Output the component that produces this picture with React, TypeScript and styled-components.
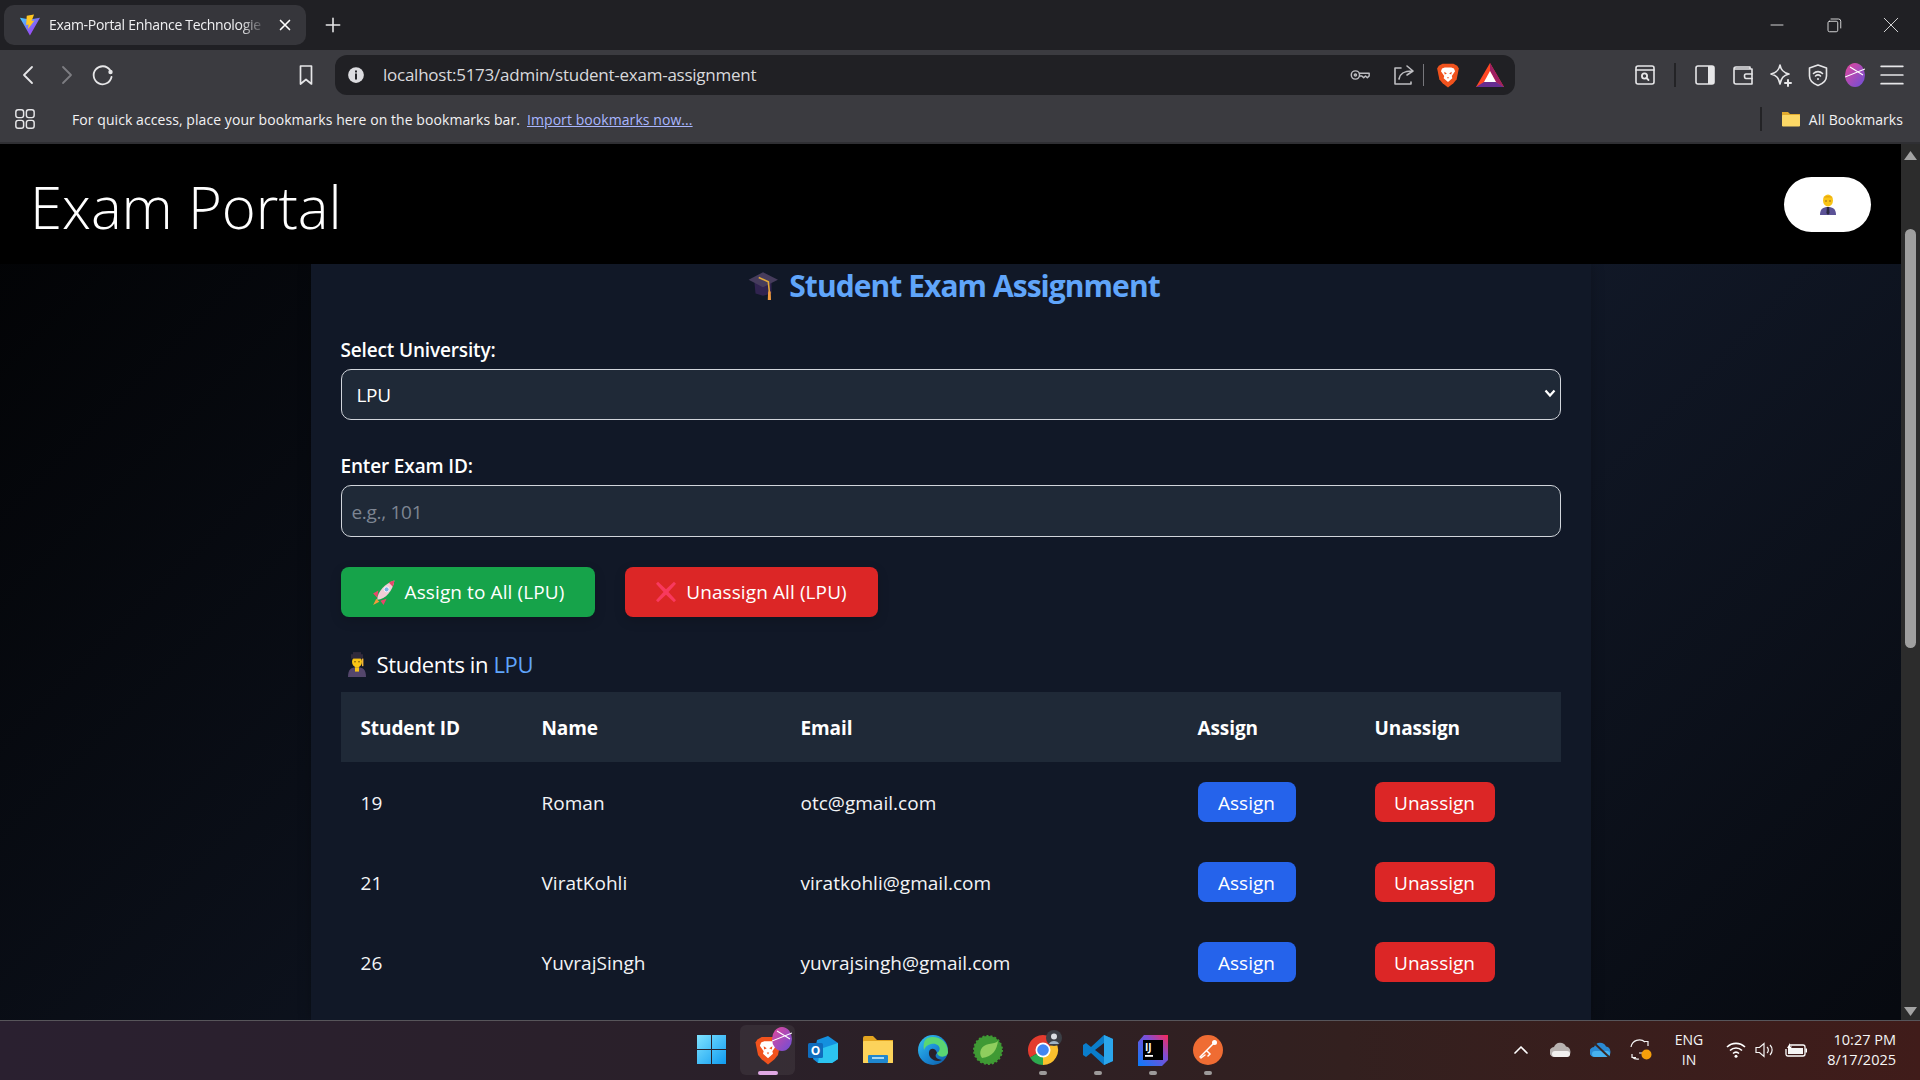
import React from "react";
import styled, { createGlobalStyle } from "styled-components";

const UI = `"Open Sans", "Noto Sans", "Liberation Sans", sans-serif`;

const Global = createGlobalStyle`
  html, body { margin: 0; padding: 0; height: 100%; overflow: hidden; background: #000; }
  #root { height: 100%; }
  * { box-sizing: border-box; }
`;

const Screen = styled.div`
  width: 1920px; height: 1080px; display: flex; flex-direction: column; overflow: hidden;
  font-family: ${UI}; color: #fff;
`;

/* ---------- browser chrome ---------- */
const TabStrip = styled.div`
  height: 50px; flex: none; background: #202024; display: flex; align-items: flex-start; padding: 5px 0 0 4px;
`;
const Tab = styled.div`
  width: 302px; height: 40px; border-radius: 10px; background: #36363b; display: flex; align-items: center; padding: 0 12px 0 15px;
`;
const TabTitle = styled.span`
  margin-left: 8px; width: 218px; font-size: 14px; line-height: 18px; padding-bottom: 1px; letter-spacing: -0.3px; white-space: nowrap; overflow: hidden; color: #f0f0f2;
  -webkit-mask-image: linear-gradient(90deg, #000 88%, transparent 100%);
  mask-image: linear-gradient(90deg, #000 88%, transparent 100%);
`;
const TabClose = styled.span`
  margin-left: 10px; display: flex;
`;
const NewTab = styled.span`
  margin-left: 17px; margin-top: 10px; display: flex;
`;
const WindowControls = styled.div`
  margin-left: auto; display: flex; height: 40px; align-items: center; padding-right: 1px;
`;
const WindowButton = styled.span`
  width: 57px; display: flex; justify-content: center;
`;
const Toolbar = styled.div`
  height: 50px; flex: none; background: #3b3b40; display: flex; align-items: center; padding: 0 0 0 10px;
`;
const Slot = styled.span<{ $w: number; $ml?: number }>`
  width: ${(p) => p.$w}px; margin-left: ${(p) => p.$ml ?? 0}px; flex: none; display: flex; align-items: center; justify-content: center;
`;
const UrlBar = styled.div`
  width: 1180px; height: 40px; margin-left: 11px; flex: none; background: #202024; border-radius: 12px; display: flex; align-items: center; padding: 0 7px 0 12px;
`;
const UrlText = styled.span`
  margin-left: 18px; font-size: 17px; line-height: 22px; padding-bottom: 1px; letter-spacing: -0.25px; color: #d9d9dc; flex: 1;
`;
const Sep = styled.span<{ $h: number; $c: string; $w?: number; $ml?: number }>`
  width: ${(p) => p.$w ?? 1}px; height: ${(p) => p.$h}px; background: ${(p) => p.$c}; flex: none; margin-left: ${(p) => p.$ml ?? 0}px;
`;
const BookmarksBar = styled.div`
  height: 44px; flex: none; background: #3b3b40; border-bottom: 2px solid #2f2f33; display: flex; align-items: center; padding: 0 0 4px 14px; font-size: 14px; letter-spacing: 0.07px;
`;
const BookmarkHint = styled.span`
  margin-left: 36px; color: #f2f2f4;
`;
const ImportLink = styled.a`
  margin-left: 7px; color: #a9b6ff; text-decoration: underline;
`;
const AllBookmarks = styled.div`
  margin-left: auto; display: flex; align-items: center; padding-right: 17px; color: #f2f2f4;
`;
const FolderBox = styled.span`
  margin: 0 8px 0 19px; display: flex;
`;

/* ---------- page ---------- */
const Viewport = styled.div`
  height: 876px; flex: none; display: flex;
`;
const PageColumn = styled.div`
  flex: 1; min-width: 0; display: flex; flex-direction: column;
  background-color: #000;
  background-image: linear-gradient(135deg, #000 0%, #111827 50%, #000 100%);
  background-size: 1901px 1750px;
  background-position: 0 -134px;
  overflow: hidden;
`;
const SiteHeader = styled.header`
  height: 120px; flex: none; background: #000; display: flex; align-items: center; justify-content: space-between; padding: 0 30px;
`;
const Brand = styled.div`
  font-size: 58px; font-weight: 300; letter-spacing: 0; color: #fff; margin-top: 5px;
`;
const AvatarButton = styled.button`
  width: 87px; height: 55px; border-radius: 28px; background: #fff; border: 0; display: flex; align-items: center; justify-content: center; padding: 0; margin-top: 1px;
`;
const Panel = styled.main`
  width: 1280px; margin: 0 auto; flex: 1; background: #111827; padding: 0 30px; box-shadow: 0 0 12px rgba(0,0,0,.25);
`;
const PageTitle = styled.h2`
  margin: 0; height: 42px; display: flex; align-items: center; justify-content: center; gap: 10px; font-size: 30px; font-weight: 700; letter-spacing: -0.95px; color: #60a5fa; padding-left: 6px;
`;
const Field = styled.div<{ $mt: number }>`
  margin-top: ${(p) => p.$mt}px;
`;
const FieldLabel = styled.label`
  display: block; height: 26px; line-height: 26px; font-size: 19px; font-weight: 600; letter-spacing: -0.15px; color: #fff; margin-bottom: 6px;
`;
const SelectWrap = styled.div`
  position: relative;
`;
const Select = styled.select`
  display: block; width: 100%; height: 51px; padding: 1px 30px 0 15px; appearance: none; -webkit-appearance: none; background: #1f2937; color: #fff; border: 1px solid #d1d5db; border-radius: 10px; font-family: ${UI}; font-size: 19px; letter-spacing: -0.3px; outline: 0;
`;
const SelectChevron = styled.span`
  position: absolute; right: 5px; top: 20px; display: flex; pointer-events: none;
`;
const Input = styled.input`
  display: block; width: 100%; height: 52px; padding: 1px 10px 0; background: #1f2937; color: #fff; border: 1px solid #d1d5db; border-radius: 10px; font-family: ${UI}; font-size: 19px; letter-spacing: -0.3px; outline: 0;
  &::placeholder { color: #7d8592; opacity: 1; }
`;
const Actions = styled.div`
  display: flex; gap: 30px; margin-top: 30px;
`;
const BulkButton = styled.button<{ $bg: string; $w: number }>`
  width: ${(p) => p.$w}px; height: 50px; border: 0; border-radius: 8px; background: ${(p) => p.$bg}; color: #fff; display: flex; align-items: center; justify-content: center; gap: 9px; font-family: ${UI}; font-size: 19px; letter-spacing: 0.1px; box-shadow: 0 4px 12px rgba(0,0,0,.15);
`;
const SectionTitle = styled.h3`
  margin: 29px 0 0; height: 36px; display: flex; align-items: center; gap: 9px; padding-left: 5px; font-size: 22px; font-weight: 400; letter-spacing: -0.38px; color: #fff;
`;
const Accent = styled.span`
  color: #60a5fa;
`;
const SectionText = styled.span``;
const Table = styled.table`
  width: 100%; margin-top: 10px; border-collapse: collapse; table-layout: fixed;
`;
const Th = styled.th<{ $w: number }>`
  width: ${(p) => p.$w}px; height: 70px; padding: 2px 20px 0; background: #1f2937; text-align: left; font-size: 19px; font-weight: 700; letter-spacing: -0.1px; color: #fff;
`;
const Td = styled.td`
  height: 80px; padding: 1px 20px 0; font-size: 19px; letter-spacing: 0.02px; color: #f3f4f6;
`;
const ButtonCell = styled.td`
  height: 80px; padding: 0 20px; vertical-align: middle;
`;
const RowButton = styled.button<{ $bg: string; $w: number }>`
  width: ${(p) => p.$w}px; height: 40px; border: 0; border-radius: 8px; background: ${(p) => p.$bg}; color: #fff; font-family: ${UI}; font-size: 19px; letter-spacing: 0; padding: 1px 0 0; display: block;
`;
const Scrollbar = styled.div`
  width: 19px; flex: none; background: #2c2c2c; display: flex; flex-direction: column; align-items: center; padding: 7px 0 4px;
`;
const ScrollThumb = styled.div`
  width: 11px; height: 419px; margin-top: 69px; background: #9f9f9f; border-radius: 6px;
`;
const ScrollArrowDown = styled.span`
  margin-top: auto; display: flex;
`;

/* ---------- taskbar ---------- */
const Taskbar = styled.div`
  height: 60px; flex: none; border-top: 1px solid #57555a; background: linear-gradient(90deg, #2a2030 0%, #2a2029 40%, #33201f 70%, #401c1a 100%); display: flex; align-items: center; padding: 0 24px 2px 683px;
`;
const AppSlot = styled.span<{ $w?: number; $active?: boolean; $dot?: boolean }>`
  position: relative; width: ${(p) => p.$w ?? 55}px; height: 50px; display: flex; align-items: center; justify-content: center;
  border-radius: 6px;
  background: ${(p) => (p.$active ? "rgba(255,255,255,.06)" : "transparent")};
  &::after {
    content: ""; display: ${(p) => (p.$dot || p.$active ? "block" : "none")}; position: absolute; bottom: 0; left: 50%;
    width: ${(p) => (p.$active ? 20 : 8)}px; height: 4px; margin-left: ${(p) => (p.$active ? -10 : -4)}px; border-radius: 2px; background: ${(p) => (p.$active ? "#e0a8e4" : "#9d9a9a")};
  }
`;
const BrandBadge = styled.span`
  position: absolute; top: 2px; right: 3px; display: flex;
`;
const Tray = styled.div`
  margin-left: auto; display: flex; align-items: center; height: 100%;
`;
const LangBox = styled.div`
  width: 56px; text-align: center; font-size: 14px; line-height: 20px; color: #f5f5f5;
`;
const Clock = styled.div`
  width: 79px; text-align: right; font-size: 14.5px; line-height: 20px; color: #f5f5f5; white-space: nowrap;
`;

/* ---------- drawings ---------- */
const S = { fill: "none", stroke: "#e6e6e8", strokeWidth: 1.6, strokeLinecap: "round", strokeLinejoin: "round" } as const;

const Ico = ({ s = 22, children }: { s?: number; children: React.ReactNode }) => (
  <svg width={s} height={s} viewBox="0 0 24 24">{children}</svg>
);

const ViteIcon = () => (
  <svg width="22" height="22" viewBox="0 0 24 24">
    <defs>
      <linearGradient id="vt" x1="0" y1="0" x2="1" y2="1"><stop offset="0" stopColor="#41d1ff" /><stop offset=".6" stopColor="#8b5cf6" /><stop offset="1" stopColor="#bd34fe" /></linearGradient>
    </defs>
    <path d="M1 4 L12 23.5 L23 4 L12 6 Z" fill="url(#vt)" />
    <path d="M16.5 .5 L8.5 2 L7.8 12 L10.5 11.4 L9.8 16.5 L17 7 L13.8 7.6 Z" fill="#ffc61f" />
  </svg>
);
const BraveIcon = ({ s = 24 }: { s?: number }) => (
  <svg width={s} height={s} viewBox="0 0 24 24">
    <path d="M7 1.5 H17 L20.5 3.5 L22 6 L20 16 L17 19.5 L12 23.5 L7 19.5 L4 16 L2 6 L3.5 3.5 Z" fill="#f0521d" />
    <path d="M6.5 6 L9 5 H15 L17.5 6 L18.5 8.5 L15.5 13 L16 15 L12 18.5 L8 15 L8.5 13 L5.5 8.5 Z" fill="#fff" />
    <path d="M8.5 9 L11 10.5 L9 11.5 Z M15.5 9 L13 10.5 L15 11.5 Z M11 14 H13 L12 15.5 Z" fill="#f0521d" />
  </svg>
);
const BatIcon = () => (
  <svg width="30" height="26" viewBox="0 0 30 26">
    <path d="M15 1 L29 25 H1 Z" fill="#ff4724" />
    <path d="M15 1 L29 25 L21 20 L15 9 Z" fill="#9e1f63" />
    <path d="M1 25 H29 L21 20 H9 Z" fill="#662d91" />
    <path d="M15 9 L21 20 H9 Z" fill="#fff" />
  </svg>
);
const ProfileOrb = ({ s = 20 }: { s?: number }) => (
  <svg width={s} height={s * 1.2} viewBox="0 0 20 24">
    <defs>
      <linearGradient id={`orb${s}`} x1="0" y1="0" x2="1" y2="1"><stop offset="0" stopColor="#e5479b" /><stop offset="1" stopColor="#6a4fd8" /></linearGradient>
    </defs>
    <ellipse cx="10" cy="12" rx="10" ry="12" fill={`url(#orb${s})`} />
    <path d="M0 14 L20 6 M5 4 L18 12" stroke="#fff" strokeWidth="1.1" fill="none" />
  </svg>
);
const CapEmoji = () => (
  <svg width="32" height="32" viewBox="0 0 30 30">
    <path d="M7 13 H23 V23 L15 25 L8 23 Z" fill="#30234f" />
    <path d="M15 3 L29 10 L15 17 L1.5 10 Z" fill="#463c5c" />
    <path d="M11 8 L20 12 L21 22" stroke="#e3a93a" strokeWidth="1.5" fill="none" />
    <path d="M19.8 21 h2.4 l.3 8 h-3 Z" fill="#f09a3e" />
  </svg>
);
const RocketEmoji = () => (
  <svg width="25" height="27" viewBox="0 0 24 26">
    <path d="M5 19 L2 25 L8 22 Z" fill="#f59a3b" />
    <path d="M7 11 L2 14 L6 18 Z M15 19 L12 25 L9 21 Z" fill="#e8476a" />
    <path d="M6 20 C6 12 14 4 22.5 1.5 C21 11 14 20 6 20 Z" fill="#f3cdd6" />
    <path d="M17 3.3 C19 2.4 21 1.8 22.5 1.5 C22.2 3.4 21.7 5.5 21 7.5 Z" fill="#e8476a" />
    <circle cx="15" cy="10" r="2.4" fill="#7fb3e6" stroke="#fff" strokeWidth=".8" />
  </svg>
);
const CrossEmoji = () => (
  <svg width="22" height="24" viewBox="0 0 22 22" preserveAspectRatio="none">
    <path d="M3 1.5 L11 8.5 L19 1.5 L21 3.5 L13.5 11 L21 18.5 L19 20.5 L11 13.5 L3 20.5 L1 18.5 L8.5 11 L1 3.5 Z" fill="#f8395e" />
  </svg>
);
const StudentEmoji = () => (
  <svg width="22" height="26" viewBox="0 0 22 24" preserveAspectRatio="none">
    <path d="M2 24 C2 17 5 15 11 15 C17 15 20 17 20 24 Z" fill="#54466c" />
    <circle cx="11" cy="10" r="5" fill="#f9c416" />
    <rect x="5" y="3" width="12" height="4" fill="#302a3b" />
    <rect x="7" y="1" width="8" height="3" fill="#302a3b" />
    <rect x="9" y="15" width="4" height="4" fill="#f9c416" />
    <circle cx="9" cy="10" r=".7" fill="#55380f" /><circle cx="13" cy="10" r=".7" fill="#55380f" />
    <rect x="16" y="7" width="1.4" height="7" fill="#f0b43c" />
  </svg>
);
const WorkerEmoji = () => (
  <svg width="18" height="22" viewBox="0 0 18 22">
    <path d="M1 21 C1 15 4 13 9 13 C14 13 17 15 17 21 Z" fill="#5b5296" />
    <path d="M8 13 H10 L10.6 19 L9 21 L7.4 19 Z" fill="#2a2840" />
    <ellipse cx="9" cy="6.5" rx="5" ry="6" fill="#f9c416" />
    <path d="M4 5 C4 1 14 1 14 5 L13 3.6 H5 Z" fill="#e7a50f" />
    <circle cx="7" cy="7" r=".7" fill="#7a4b10" /><circle cx="11" cy="7" r=".7" fill="#7a4b10" />
  </svg>
);

const students = [
  { id: 19, name: "Roman", email: "otc@gmail.com" },
  { id: 21, name: "ViratKohli", email: "viratkohli@gmail.com" },
  { id: 26, name: "YuvrajSingh", email: "yuvrajsingh@gmail.com" },
];

export default function App() {
  return (
    <Screen>
      <Global />
      <TabStrip>
        <Tab>
          <ViteIcon />
          <TabTitle>Exam-Portal Enhance Technologie</TabTitle>
          <TabClose><Ico s={18}><path d="M6 6 L18 18 M18 6 L6 18" {...S} strokeWidth={2.2} stroke="#fff" /></Ico></TabClose>
        </Tab>
        <NewTab><Ico s={20}><path d="M12 4 V20 M4 12 H20" {...S} strokeWidth={1.9} /></Ico></NewTab>
        <WindowControls>
          <WindowButton><Ico s={18}><path d="M4 12 H20" {...S} strokeWidth={1.2} /></Ico></WindowButton>
          <WindowButton><Ico s={18}><rect x="4" y="7" width="13" height="14" rx="2" {...S} strokeWidth={1.2} /><path d="M8 4 H18 Q21 4 21 7 V16" {...S} strokeWidth={1.2} /></Ico></WindowButton>
          <WindowButton><Ico s={18}><path d="M3 3 L21 21 M21 3 L3 21" {...S} strokeWidth={1.2} /></Ico></WindowButton>
        </WindowControls>
      </TabStrip>

      <Toolbar>
        <Slot $w={37}><Ico s={24}><path d="M15 4 L7 12 L15 20" {...S} strokeWidth={1.8} /></Ico></Slot>
        <Slot $w={37}><Ico s={24}><path d="M9 4 L17 12 L9 20" {...S} strokeWidth={1.8} stroke="#7d7d82" /></Ico></Slot>
        <Slot $w={37}><Ico s={24}><path d="M19 7 A9 9 0 1 0 20.5 14" {...S} strokeWidth={1.8} /><circle cx="19.5" cy="9" r="2.2" fill="#e6e6e8" /></Ico></Slot>
        <Slot $w={37} $ml={166}><Ico s={24}><path d="M6.5 3 H17.5 V21 L12 16.5 L6.5 21 Z" {...S} strokeWidth={1.7} /></Ico></Slot>
        <UrlBar>
          <Ico s={18}>
            <circle cx="12" cy="12" r="10.5" fill="#dcdce0" />
            <rect x="10.7" y="10" width="2.6" height="8" fill="#202024" />
            <rect x="10.7" y="6" width="2.6" height="2.6" fill="#202024" />
          </Ico>
          <UrlText>localhost:5173/admin/student-exam-assignment</UrlText>
          <Slot $w={44}><Ico s={22}><circle cx="7" cy="12" r="4.5" {...S} stroke="#bdbdc1" /><circle cx="7" cy="12" r="1.2" {...S} stroke="#bdbdc1" /><path d="M11.5 10 H22 V13 L20 15 L18 13 L16 15 L14 13 H11.5" {...S} stroke="#bdbdc1" /></Ico></Slot>
          <Slot $w={41}><Ico s={24}><path d="M10 5 H4 V21 H20 V19" {...S} stroke="#bdbdc1" /><path d="M8 16 C9 10 13 8 21 8 M16 3 L22 8 L16 12" {...S} stroke="#bdbdc1" /></Ico></Slot>
          <Sep $h={22} $c="#77777c" />
          <Slot $w={48}><BraveIcon s={26} /></Slot>
          <Slot $w={36}><BatIcon /></Slot>
        </UrlBar>
        <Slot $w={40} $ml={110}><Ico s={24}><rect x="3" y="3" width="18" height="18" rx="2" {...S} /><path d="M3 7 H21" {...S} /><circle cx="11.5" cy="13" r="2.6" {...S} strokeWidth={1.8} /><path d="M13.5 15 L15.5 17" {...S} strokeWidth={1.8} /></Ico></Slot>
        <Sep $h={24} $c="#232326" $w={2} $ml={9} />
        <Slot $w={38} $ml={10}><Ico s={24}><rect x="3" y="3" width="18" height="18" rx="2" {...S} /><rect x="15" y="3" width="6" height="18" fill="#e6e6e8" /></Ico></Slot>
        <Slot $w={38}><Ico s={24}><path d="M19 6 V4 H5 Q3 4 3 6 V19 Q3 21 5 21 H21 V6 H3" {...S} /><path d="M21 11 H15 Q13.5 11 13.5 13 Q13.5 15.5 15 15.5 H21" {...S} /></Ico></Slot>
        <Slot $w={37}><Ico s={24}><path d="M11 2 C12 7 14 9.5 20 11 C14 12.5 12.5 15 11 21 C9.5 15 8 12.5 2 11 C8 9.5 10 7 11 2 Z" {...S} /><path d="M19 17 V23 M16 20 H22" {...S} strokeWidth={2} /></Ico></Slot>
        <Slot $w={37}><Ico s={24}><path d="M12 2 L20.5 5 V13 C20.5 18 16 21 12 22.5 C8 21 3.5 18 3.5 13 V5 Z" {...S} /><path d="M7.5 10.5 C10 8 14 8 16.5 10.5 M9.5 13 C11 11.7 13 11.7 14.5 13" {...S} /><circle cx="12" cy="16" r="1" fill="#e6e6e8" /></Ico></Slot>
        <Slot $w={38}><ProfileOrb s={20} /></Slot>
        <Slot $w={36}><Ico s={26}><path d="M2 4 H22 M2 12 H22 M2 20 H22" {...S} /></Ico></Slot>
      </Toolbar>

      <BookmarksBar>
        <Ico s={22}>
          <rect x="2" y="2" width="8.5" height="8.5" rx="2.5" {...S} /><rect x="13.5" y="2" width="8.5" height="8.5" rx="2.5" {...S} />
          <rect x="2" y="13.5" width="8.5" height="8.5" rx="2.5" {...S} /><rect x="13.5" y="13.5" width="8.5" height="8.5" rx="2.5" {...S} />
        </Ico>
        <BookmarkHint>For quick access, place your bookmarks here on the bookmarks bar.</BookmarkHint>
        <ImportLink>Import bookmarks now...</ImportLink>
        <AllBookmarks>
          <Sep $h={24} $c="#232326" $w={2} />
          <FolderBox>
            <svg width="20" height="16" viewBox="0 0 20 16"><path d="M1 1 H7 L9 3 H19 V15 H1 Z" fill="#e2ab2e" /><rect x="1" y="4" width="18" height="11.5" rx="1" fill="#fcd866" /></svg>
          </FolderBox>
          All Bookmarks
        </AllBookmarks>
      </BookmarksBar>

      <Viewport>
        <PageColumn>
          <SiteHeader>
            <Brand>Exam Portal</Brand>
            <AvatarButton><WorkerEmoji /></AvatarButton>
          </SiteHeader>
          <Panel>
            <PageTitle><CapEmoji />Student Exam Assignment</PageTitle>
            <Field $mt={31}>
              <FieldLabel>Select University:</FieldLabel>
              <SelectWrap>
                <Select defaultValue="LPU"><option value="LPU">LPU</option></Select>
                <SelectChevron>
                  <svg width="12" height="9" viewBox="0 0 12 9"><path d="M1.5 1.5 L6 6.5 L10.5 1.5" fill="none" stroke="#fff" strokeWidth="2.2" /></svg>
                </SelectChevron>
              </SelectWrap>
            </Field>
            <Field $mt={33}>
              <FieldLabel>Enter Exam ID:</FieldLabel>
              <Input placeholder="e.g., 101" />
            </Field>
            <Actions>
              <BulkButton $bg="#16a34a" $w={254}><RocketEmoji />Assign to All (LPU)</BulkButton>
              <BulkButton $bg="#dc2626" $w={253}><CrossEmoji />Unassign All (LPU)</BulkButton>
            </Actions>
            <SectionTitle><StudentEmoji /><SectionText>Students in <Accent>LPU</Accent></SectionText></SectionTitle>
            <Table>
              <thead>
                <tr>
                  <Th $w={181}>Student ID</Th>
                  <Th $w={259}>Name</Th>
                  <Th $w={397}>Email</Th>
                  <Th $w={177}>Assign</Th>
                  <Th $w={206}>Unassign</Th>
                </tr>
              </thead>
              <tbody>
                {students.map((s) => (
                  <tr key={s.id}>
                    <Td>{s.id}</Td>
                    <Td>{s.name}</Td>
                    <Td>{s.email}</Td>
                    <ButtonCell><RowButton $bg="#2563eb" $w={98}>Assign</RowButton></ButtonCell>
                    <ButtonCell><RowButton $bg="#dc2626" $w={120}>Unassign</RowButton></ButtonCell>
                  </tr>
                ))}
              </tbody>
            </Table>
          </Panel>
        </PageColumn>
        <Scrollbar>
          <svg width="13" height="9" viewBox="0 0 13 9"><path d="M6.5 0 L13 9 H0 Z" fill="#a3a3a3" /></svg>
          <ScrollThumb />
          <ScrollArrowDown><svg width="13" height="9" viewBox="0 0 13 9"><path d="M6.5 9 L13 0 H0 Z" fill="#a3a3a3" /></svg></ScrollArrowDown>
        </Scrollbar>
      </Viewport>

      <Taskbar>
        <AppSlot $w={57}>
          <svg width="29" height="29" viewBox="0 0 29 29">
            <defs><linearGradient id="win" x1="0" y1="0" x2="1" y2="1"><stop offset="0" stopColor="#7fe3ff" /><stop offset="1" stopColor="#0f9bf0" /></linearGradient></defs>
            <path d="M0 0 H14 V14 H0 Z M15 0 H29 V14 H15 Z M0 15 H14 V29 H0 Z M15 15 H29 V29 H15 Z" fill="url(#win)" />
          </svg>
        </AppSlot>
        <AppSlot $active>
          <BraveIcon s={30} />
          <BrandBadge><ProfileOrb s={20} /></BrandBadge>
        </AppSlot>
        <AppSlot>
          <svg width="30" height="30" viewBox="0 0 30 30">
            <path d="M9 5 L20 1 L30 8 V24 L24 28 H10 L5 24 Z" fill="#1490df" />
            <path d="M12 14 L30 8 V24 L24 28 H10 Z" fill="#2cc4f0" />
            <rect x="0" y="8" width="15" height="15" rx="1.5" fill="#0f6cbd" />
            <text x="7.5" y="20" textAnchor="middle" fontSize="12" fontWeight="700" fill="#fff" fontFamily="Open Sans">O</text>
          </svg>
        </AppSlot>
        <AppSlot>
          <svg width="30" height="28" viewBox="0 0 30 28">
            <path d="M0 2 Q0 0 2 0 H10 L14 4 H30 V27 H0 Z" fill="#e3a520" />
            <rect x="0" y="5" width="30" height="22" rx="1" fill="#fcd35b" />
            <rect x="5" y="19" width="20" height="8" rx="1" fill="#1f87cf" />
            <rect x="9" y="21" width="12" height="2" fill="#a6d8f2" />
          </svg>
        </AppSlot>
        <AppSlot>
          <svg width="30" height="30" viewBox="0 0 30 30">
            <defs><linearGradient id="edg" x1="0" y1="0" x2="1" y2="1"><stop offset="0" stopColor="#36c3f0" /><stop offset=".5" stopColor="#1a8bd6" /><stop offset="1" stopColor="#0c59a4" /></linearGradient></defs>
            <circle cx="15" cy="15" r="15" fill="url(#edg)" />
            <path d="M8 4 C16 -1 30 4 30 17 C30 23 20 23 19 18 C25 14 20 7 13 9 C9 10 7 12 6 15 C5 10 6 6 8 4 Z" fill="#5ad672" />
            <path d="M19 18 C18 13 12 12 11 17 C10 23 17 28 24 25 C18 24 16 21 19 18 Z" fill="#2a2029" />
          </svg>
        </AppSlot>
        <AppSlot>
          <svg width="30" height="30" viewBox="0 0 30 30">
            <circle cx="15" cy="15" r="14" fill="#3f9a34" stroke="#3f9a34" strokeWidth="2" strokeDasharray="2 2" />
            <path d="M25 6 C24 14 20 22 9 23 C5 18 8 10 16 9 C20 8.5 23 8 25 6 Z" fill="#8fce5e" />
          </svg>
        </AppSlot>
        <AppSlot $dot>
          <svg width="38" height="40" viewBox="0 0 38 40">
            <path d="M19 20 L6 27.5 A15 15 0 0 1 32 12.5 Z" fill="#e33b2e" />
            <path d="M19 20 L6 27.5 A15 15 0 0 0 19 35 Z" fill="#2da94f" />
            <path d="M19 20 L32 12.5 A15 15 0 0 1 19 35 Z" fill="#fbc02d" />
            <circle cx="19" cy="20" r="7.5" fill="#fff" /><circle cx="19" cy="20" r="5.8" fill="#4285f4" />
            <circle cx="30" cy="8" r="8" fill="#3b3f46" /><circle cx="30" cy="6.5" r="3" fill="#d9dee3" /><path d="M25 14 C26 10 34 10 35 14 Z" fill="#9fb2c3" />
          </svg>
        </AppSlot>
        <AppSlot $dot>
          <svg width="30" height="30" viewBox="0 0 30 30">
            <path d="M21 0 L30 4 V26 L21 30 L8 18 L3 22 L0 20 V10 L3 8 L8 12 Z" fill="#0a7dcb" />
            <path d="M21 8 L12 15 L21 22 Z" fill="#2a2029" />
            <path d="M21 0 L30 4 V26 L21 30 Z" fill="#2ba6ec" />
          </svg>
        </AppSlot>
        <AppSlot $dot>
          <svg width="30" height="32" viewBox="0 0 30 32">
            <defs><linearGradient id="ij" x1="0" y1="1" x2="1" y2="0"><stop offset="0" stopColor="#087cfa" /><stop offset=".6" stopColor="#7a4fd8" /><stop offset="1" stopColor="#fe2857" /></linearGradient></defs>
            <path d="M6 1 H30 V26 L24 32 H0 V8 Z" fill="url(#ij)" />
            <rect x="5" y="6" width="20" height="20" fill="#000" />
            <text x="7" y="17" fontSize="10" fontWeight="700" fill="#fff" fontFamily="Open Sans">IJ</text>
            <rect x="7" y="21" width="8" height="1.8" fill="#fff" />
          </svg>
        </AppSlot>
        <AppSlot $dot>
          <svg width="30" height="30" viewBox="0 0 30 30">
            <circle cx="15" cy="15" r="15" fill="#ef6c33" />
            <path d="M7 22 L15 14 M15 14 L21 8 M8 23 L12 20 M14 16 L17 19 L15 21" stroke="#fff" strokeWidth="1.5" fill="none" strokeLinecap="round" />
            <circle cx="21.5" cy="7.5" r="2.5" fill="#fff" />
          </svg>
        </AppSlot>
        <Tray>
          <Slot $w={40}><Ico s={18}><path d="M4 16 L12 8 L20 16" fill="none" stroke="#fff" strokeWidth="2.2" strokeLinecap="round" strokeLinejoin="round" /></Ico></Slot>
          <Slot $w={40}>
            <svg width="22" height="15" viewBox="0 0 22 15"><path d="M5 15 A5 5 0 0 1 4 5 A6.5 6.5 0 0 1 16 4.5 A5.5 5.5 0 0 1 17 15 Z" fill="#b8b2b0" /><path d="M5 15 A3 3 0 0 1 5 9 H17 A3 3 0 0 1 17 15 Z" fill="#f2f0ef" /></svg>
          </Slot>
          <Slot $w={40}>
            <svg width="22" height="16" viewBox="0 0 22 16"><path d="M5 15 A5 5 0 0 1 4 5 A6.5 6.5 0 0 1 16 4.5 A5.5 5.5 0 0 1 17 15 Z" fill="#2a8ad4" /><path d="M5 15 A3 3 0 0 1 5 9 H17 A3 3 0 0 1 17 15 Z" fill="#47b1ef" /><path d="M3 0 L19 15" stroke="#3a2622" strokeWidth="2" /></svg>
          </Slot>
          <Slot $w={40}>
            <svg width="24" height="24" viewBox="0 0 24 24">
              <path d="M2 9 A8.5 8.5 0 0 1 16 4 M19 8 V3.5 H15 M20 15 H10 M3 16 V19.5 H7 M3 19 A8 8 0 0 0 10 21" fill="none" stroke="#f5f5f5" strokeWidth="1.2" />
              <circle cx="17.5" cy="16.5" r="5" fill="#f59f0b" />
            </svg>
          </Slot>
          <LangBox>ENG<br />IN</LangBox>
          <Slot $w={38}>
            <svg width="20" height="16" viewBox="0 0 20 16"><path d="M1 5 A13 13 0 0 1 19 5 M4 8.5 A8.5 8.5 0 0 1 16 8.5 M7 11.5 A4.5 4.5 0 0 1 13 11.5" fill="none" stroke="#fff" strokeWidth="1.6" /><circle cx="10" cy="14.3" r="1.5" fill="#fff" /></svg>
          </Slot>
          <Slot $w={20}>
            <svg width="20" height="16" viewBox="0 0 20 16"><path d="M1 5.5 H4.5 L9 1.5 V14.5 L4.5 10.5 H1 Z M12 5 A4 4 0 0 1 12 11 M15 3 A7 7 0 0 1 15 13" fill="none" stroke="#f5f5f5" strokeWidth="1.2" /></svg>
          </Slot>
          <Slot $w={42}>
            <svg width="22" height="14" viewBox="0 0 22 14"><path d="M5 2 H18 Q20 2 20 4 V11 Q20 13 18 13 H3 Q1 13 1 11 V6" fill="none" stroke="#fff" strokeWidth="1.3" /><rect x="3" y="5" width="15" height="6" fill="#f5f5f5" /><rect x="20.5" y="5.5" width="1.5" height="4" fill="#fff" /><path d="M5 0 L2 5 H5 L4 8 L7 3.5 H5 Z" fill="#fff" /></svg>
          </Slot>
          <Clock>10:27 PM<br />8/17/2025</Clock>
        </Tray>
      </Taskbar>
    </Screen>
  );
}
